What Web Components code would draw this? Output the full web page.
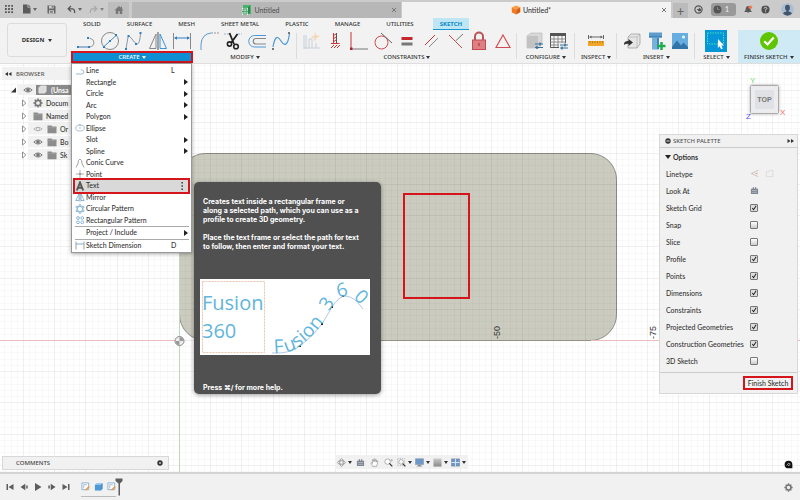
<!DOCTYPE html>
<html lang="en">
<head>
<meta charset="utf-8">
<title>Untitled</title>
<style>
html,body{margin:0;height:100%}
body{overflow:hidden;background:#fff;color:#333;font:500 7px/12px Lato,"Open Sans",sans-serif}
</style>
</head>
<body>
<design-app></design-app>
<script>
const ICONS={
apps:['0 0 9 9','<path fill="#555" d="M0 0h2v2H0zM3.5 0h2v2h-2zM7 0h2v2H7zM0 3.5h2v2H0zM3.5 3.5h2v2h-2zM7 3.5h2v2H7zM0 7h2v2H0zM3.5 7h2v2h-2zM7 7h2v2H7z"/>'],
file:['0 0 9 10','<path fill="#5b5b5b" d="M1 .5h4.5v3h3v6H1zM6.3.5l2.2 2.3H6.3z"/>'],
save:['0 0 9 9','<path fill="#666" d="M.5.5h7l1 1v7h-8z"/><path fill="#ccc" d="M2 .8h4.6v2.6H2zM2 5.2h5v3.3H2z"/><path fill="#666" d="M4.8 1h1v1.8h-1zM3 6h3v.8H3zM3 7.4h3v.6H3z"/>'],
undo:['0 0 9 9','<path d="M4 1 1.2 3.8 4 6.6M1.5 3.8h4Q8 4.2 7.6 8" fill="none" stroke="#555" stroke-width="1.3"/>'],
redo:['0 0 9 9','<path d="M5 1 7.8 3.8 5 6.6M7.5 3.8h-4Q1 4.2 1.4 8" fill="none" stroke="#999" stroke-width="1.2"/>'],
home:['0 0 10 10','<path fill="#777" d="M5 1 .5 5.3h1.3V9h2.4V6.2h1.6V9h2.4V5.3h1.3L8 3.7V1.6H7v1.2z"/>'],
grid:['0 0 10 10','<rect x="1" y="0" width="8" height="9" fill="#47b36b"/><path d="M0 3h6v7H0z" fill="#fff" opacity=".85"/><path d="M1 4h4v5H1zM2 3v7M4 3v7M0 6.5h6" fill="none" stroke="#329a59" stroke-width=".7"/><path d="m6 2 2-1v7l-2 1z" fill="#278a4c"/>'],
cube:['0 0 10 10','<path fill="#ff9b3c" d="M5 .5 9.3 2.3 5.2 4.6.7 2.6z"/><path fill="#f47a20" d="m.7 2.6 4.5 2v5L.9 7.4z"/><path fill="#d95f10" d="m5.2 4.6 4.1-2.3v5L5.2 9.6z"/>'],
sync:['0 0 10 10','<circle cx="5" cy="5" r="4" fill="none" stroke="#555" stroke-width="1.3"/><path d="M3 4.5h2.4V2.4l2.4 2.4V7H5z" fill="#555"/>'],
clock:['0 0 10 10','<circle cx="5" cy="5" r="4.4" fill="#555"/><path d="M5 2.3V5h2.2" fill="none" stroke="#8b8b8b" stroke-width="1"/>'],
bell:['0 0 10 10','<path fill="#585858" d="M4.4 1.2Q7 1 7 4q0 2.300 1.500 3.200v.5h-8v-.5Q2 6.500 2 4q0-2.400 2.400-2.800zM3.300 8.200h2.400q-1.200 1.600-2.400 0z"/><circle cx="7" cy="2.500" r="2" fill="#f2764a"/>'],
help:['0 0 10 10','<circle cx="5" cy="5" r="4.5" fill="#505050"/><path d="M3.500 4Q3.600 2.500 5 2.500T6.500 4Q6.500 4.700 5 5.300V6.200M5 7v1" fill="none" stroke="#ddd" stroke-width="1"/>'],
user:['0 0 14 14','<circle cx="7" cy="7" r="6.800" fill="#a9bdd3"/><path fill="#43556b" d="M7 2q2.600 0 2.600 2.800T8.200 8v1.200q3.300.600 3.600 2.500-4.800 3.800-9.600 0 .3-1.900 3.600-2.500V8Q4.400 7.600 4.400 4.800T7 2z"/>'],
line:['0 0 20 20','<path d="M2 16h12q3.500-.5 4-4t-4.500-5" fill="none" stroke="#999"/><path d="M2 16h12" stroke="#7ba6cf" fill="none"/><path fill="#2f7fc4" d="M1 15h2v2H1zM12 15h2v2h-2zM11 6h2v2h-2z"/>'],
circle:['0 0 20 20','<circle cx="10" cy="10" r="8.500" fill="none" stroke="#888"/><path d="m4 15.500 12-11" stroke="#3a8ad0"/><path fill="#2f7fc4" d="M3 15h2v2H3zM9 9h2v2H9zM15 3h2v2h-2z"/>'],
spline:['0 0 20 20','<path d="M2 18L4 6q1.500-2 4 2t5 5q3 0 3.500-11" fill="none" stroke="#8b97a3"/><path fill="#2f7fc4" d="M1 17h2v2H1zM3.500 4h2v2h-2zM11 12h2v2h-2zM15.500 1h2v2h-2z"/>'],
mirror:['0 0 20 20','<path d="M8 3v14.500H1.500z" fill="none" stroke="#888"/><path d="M12 3v14.500h6.500z" fill="none" stroke="#3c93d6"/><path d="M10 1v18" stroke="#555"/>'],
dim:['0 0 20 20','<path d="M1.500 2v16M18.500 2v16" stroke="#888"/><path d="M3 7h14" stroke="#2f7fc4"/><path d="M2 7l3-1.800v3.600zM18 7l-3-1.800v3.600z" fill="#2f7fc4"/>'],
fillet:['0 0 20 20','<path d="M2 19V13Q3 3 12 2" fill="none" stroke="#559bd5"/><path d="M12 2h8" stroke="#999" stroke-dasharray="2 1"/>'],
scissors:['0 0 20 20','<path d="M1 3h7M15 3h4" stroke="#8fb8d8" stroke-dasharray="2 1"/><path d="M6.500 2l4.500 11M14.500 3 8 12" stroke="#222" stroke-width="1.800" fill="none"/><circle cx="6.500" cy="13" r="2.100" fill="none" stroke="#222" stroke-width="1.600"/><circle cx="13" cy="15.500" r="2.300" fill="none" stroke="#222" stroke-width="1.600"/>'],
offset:['0 0 20 20','<path d="M19 4.500H7.500a5.700 5.700 0 0 0 0 11.500H19" fill="none" stroke="#4a97d8"/><path d="M19 7.500H9a2.700 2.700 0 0 0 0 5.500h10" fill="none" stroke="#888" stroke-width="1.200"/>'],
curve:['0 0 20 20','<path d="M2 16C4 4 7 5 10 10S17 16 18.500 2" fill="none" stroke="#4a97d8" stroke-width="1.200"/><path d="M1 17h2v2H1zM17 1h2v2h-2z" fill="#777"/>'],
autodim:['0 0 20 20','<g opacity=".4"><path d="M3 4v14M5 4v14M3 17h16" fill="none" stroke="#8ca0b4"/><path d="M8 8h3v9M8 8v9M15 12v5" fill="none" stroke="#8ca0b4"/><path d="m14 1 1.200 3.200L19 5l-3.400 2L14 11l-1-3.800L10 6l3.400-1.400z" fill="#f3b25e"/></g>'],
horiz:['0 0 20 20','<path d="M11.500 2v10" stroke="#555"/><path d="M8.500 2v10M6 12.500h8.500" stroke="#c33"/><path d="m8 5 3-2M8 8l3-2M8 11l3-2M6 17l3-3M9 17l3-3M12 17l3-3" stroke="#c33" fill="none"/>'],
perp:['0 0 20 20','<path d="M2 1v17" stroke="#c8323a"/><path d="M2 18h17" stroke="#777"/><rect x="1" y="16.500" width="2.500" height="2.500" fill="#a22"/>'],
tangent:['0 0 20 20','<circle cx="8.500" cy="11.500" r="6.500" fill="none" stroke="#cf4a50"/><path d="M8 2l11 10" stroke="#666"/>'],
equal:['0 0 20 20','<path fill="#c4282d" d="M4.500 6h11v3h-11z"/><path fill="#777" d="M4.500 11.500h11v3h-11z"/>'],
parallel:['0 0 20 20','<path d="M4 14 14 4" stroke="#c8323a"/><path d="m8 16 9-9" stroke="#888"/>'],
coinc:['0 0 20 20','<path d="M4 4l6.500 6.500L17 17" stroke="#cf4a50" fill="none"/><path d="M10.500 10 18 3" stroke="#777"/>'],
lock:['0 0 20 20','<path d="M6 9V5.500a4 4 0 0 1 8 0V9" fill="none" stroke="#b55" stroke-width="2"/><rect x="3.500" y="9" width="13" height="9.500" fill="#dd8085" stroke="#c44a50"/><path d="M10 12v3" stroke="#a22" stroke-width="1"/>'],
tri:['0 0 20 20','<path d="M10 4 17 16.500H3z" fill="none" stroke="#cf4a50" stroke-width="1.100"/>'],
block:['0 0 20 20','<path fill="#d8d8d8" stroke="#aaa" stroke-width=".5" d="M3 5l4-3h11v11l-3 4H3z"/><path fill="#c2c2c2" d="M3 5h11v12H3z"/><path d="M11 13h8M11 16.500h8" stroke="#39709c"/><path d="M16 11.500v3M13 15v3" stroke="#39709c" stroke-width="1.500"/>'],
tablecfg:['0 0 20 20','<path d="M2.500 2.500h15v14h-15z" fill="#f6f6f6" stroke="#555"/><path d="M2 2h16v3H2z" fill="#555"/><path d="M2 8h16M2 11h16M2 14h10M6 5v11M10 5v11M14 5v7" stroke="#777" stroke-width=".8"/><path fill="#f2f2f2" d="M11 12h9v8h-9z"/><path d="M12 14h8M12 17h8" stroke="#39709c"/><path d="M17 12.500v3M14 15.500v3" stroke="#39709c" stroke-width="1.500"/>'],
ruler:['0 0 20 20','<path d="M2.500 4v4M17.500 4v4M4 6h12" stroke="#666"/><path d="m3 6 2.500-1.500v3zM17 6l-2.500-1.500v3z" fill="#666"/><path fill="#f0a628" d="M2 10h16v5H2z"/><path d="M4 10v2M6.500 10v2M9 10v2M11.500 10v2M14 10v2M16.500 10v2" stroke="#a86c10" stroke-width=".7"/>'],
insert:['0 0 20 20','<path fill="#e6e6e6" stroke="#888" stroke-width=".6" d="M6 6l3-3h9v10l-3 4H6z"/><path d="M6 6h9v11M15 6l3-3" fill="none" stroke="#aaa" stroke-width=".6"/><path fill="#333" d="M2 14q-.5-4 4.500-4V8l4.500 3.500L6.500 15v-2.200Q3.500 12.500 2 14z"/>'],
bolt:['0 0 20 20','<path fill="#5d9ccc" d="M3 1.500h13v5H3z"/><path fill="#76b1dc" d="M6 6.500h7V18.500H6z"/><path fill="#3f83b8" d="M3 5h13v1.500H3zM11 7h2v11h-2z"/><path d="M15.500 11v8M11.500 15h8" stroke="#1cae4c" stroke-width="2.500"/>'],
image:['0 0 20 20','<path fill="#66aee0" d="M2 2h16v16H2z"/><circle cx="13.500" cy="6" r="1.600" fill="#e8f5ff"/><path fill="#3273a8" d="m2 16 5-6.500 4 5 2.500-3L18 16v2H2z"/>'],
select:['0 0 22 22','<path fill="#0696d7" d="M0 0h22v22H0z"/><path d="M2.500 3h16v11h-16z" fill="none" stroke="#45dfb8" stroke-dasharray="1.500 1"/><path d="m13 9 6 6.500h-2.700l1.500 3-1.700.8-1.400-3.100-1.900 1.800z" fill="#fff"/>'],
check:['0 0 20 20','<circle cx="10" cy="10" r="9" fill="#5fc500"/><path d="m5.200 10.200 3.300 3.300 6.200-7" fill="none" stroke="#fff" stroke-width="2.200"/>'],
mline:['0 0 10 10','<path d="M1 8h6q2-.5 2-2T6 3.500" fill="none" stroke="#88a4bd" stroke-width=".8"/>'],
mellipse:['0 0 10 10','<ellipse cx="5" cy="5" rx="4.300" ry="3" fill="none" stroke="#88a4bd" stroke-width=".7"/><path d="M4.500 4.500h1v1h-1zM4.500 1.500h1v1h-1z" fill="#48a"/>'],
conic:['0 0 10 10','<path d="M1 9.500Q3.500 6 3.500 2.500q1.500-3 3 0Q6.500 6 9 9.500" fill="none" stroke="#888" stroke-width=".8"/>'],
point:['0 0 10 10','<path d="M5 1v8M1 5h8" stroke="#888" stroke-width=".7"/><path d="M4.500 4.500h1v1h-1z" fill="#247"/>'],
text:['0 0 10 10','<path d="M1.800 9.500 5 1.500l3.200 8M3 6.800h4" fill="none" stroke="#555" stroke-width="1.900"/>'],
mmirror:['0 0 10 10','<path d="M4 2v6.500H.8zM6 2v6.500h3.200z" fill="none" stroke="#5b9bcd" stroke-width=".7"/><path d="M5 0v10" stroke="#888" stroke-width=".6"/>'],
circpat:['0 0 10 10','<circle cx="5" cy="5" r="2.800" fill="none" stroke="#79add6" stroke-width=".8"/><g fill="#fff" stroke="#5b9bcd" stroke-width=".7"><circle cx="5" cy="1.500" r="1"/><circle cx="8" cy="3.200" r="1"/><circle cx="8" cy="6.800" r="1"/><circle cx="5" cy="8.500" r="1"/><circle cx="2" cy="6.800" r="1"/><circle cx="2" cy="3.200" r="1"/></g>'],
rectpat:['0 0 10 10','<g fill="none" stroke="#6fa5d0" stroke-width=".8"><circle cx="3" cy="3" r="1.400"/><circle cx="7.300" cy="3" r="1.400"/><circle cx="3" cy="7.300" r="1.400"/><circle cx="7.300" cy="7.300" r="1.400"/></g>'],
mdim:['0 0 10 10','<path d="M1 1.500v8M9 1.500v8" stroke="#888" stroke-width=".8"/><path d="M1 4h8" stroke="#5b9bcd" stroke-width=".8"/>'],
eye:['0 0 10 10','<path d="M.8 5Q5 .8 9.200 5 5 9.200.800 5z" fill="#ddd" stroke="#777" stroke-width=".9"/><circle cx="5" cy="5" r="1.800" fill="#777"/>'],
eyeoff:['0 0 10 10','<path d="M.8 5Q5 1.500 9.200 5 5 8.500.800 5z" fill="none" stroke="#aaa" stroke-width=".8"/><circle cx="5" cy="5" r="1.600" fill="none" stroke="#aaa" stroke-width=".7"/>'],
folder:['0 0 10 10','<path fill="#8d8d8d" d="M.5 1.500h4l.8 1h4.200v6.700h-9z"/><path d="M.5 3.700h9" stroke="#aaa" stroke-width=".5"/>'],
gear:['0 0 10 10','<circle cx="5" cy="5" r="2.700" fill="none" stroke="#777" stroke-width="1.700"/><path d="M5 .4v2M5 7.600v2M.4 5h2M7.600 5h2M1.800 1.800l1.300 1.300M6.900 6.900l1.300 1.300M8.200 1.800 6.900 3.100M3.100 6.900 1.800 8.200" stroke="#777" stroke-width="1.500"/>'],
comp:['0 0 10 10','<path fill="#ddd" stroke="#f5f5f5" stroke-width=".7" d="M1 3l2-2h6v6L7.500 9H1z"/>'],
open:['0 0 8 8','<path fill="#333" d="M6 1.500v5H1z"/>'],
shut:['0 0 8 8','<path fill="#fff" stroke="#777" stroke-width=".8" d="M2.500 1v6l3.300-3z"/>'],
dleft:['0 0 8 8','<path fill="#333" d="M4 2v4L1 4zM7.500 2v4l-3-2z"/>'],
dright:['0 0 8 8','<path fill="#333" d="M4 2v4l3-2zM.5 2v4l3-2z"/>'],
minus:['0 0 6 6','<circle cx="3" cy="3" r="2.700" fill="#333"/><path d="M1.500 3h3" stroke="#eee"/>'],
plusdot:['0 0 6 6','<circle cx="3" cy="3" r="2.700" fill="#333"/><path d="M2 3h2M3 2v2" stroke="#ddd" stroke-width=".8"/>'],
ltype:['0 0 10 10','<path d="M9 1.500 1.500 5 9 8.500" fill="none" stroke="#b39a8a" stroke-width=".8" stroke-dasharray="1.500 .5"/><path d="M6 5h2.500" stroke="#d99"/>'],
ltype2:['0 0 10 10','<path d="M1.500 3h3l1-1.500h3l.5 7h-7.500z" fill="none" stroke="#d8d4d0" stroke-width=".8"/>'],
look:['0 0 10 10','<path fill="#7d8590" d="M1 3h2V1.500h1.500V3h1V1.500H7V3h2v6H1z"/><path d="M2 5h6M2 7h6" stroke="#c8ccd2" stroke-width=".7"/>'],
orbit:['0 0 10 10','<ellipse cx="5" cy="5" rx="4.300" ry="2" fill="none" stroke="#777" stroke-width=".7"/><ellipse cx="5" cy="5" rx="2" ry="4.300" fill="none" stroke="#777" stroke-width=".7"/>'],
hand:['0 0 10 10','<path d="M3 9.300 1 5.500q.6-1 1.800.5L2.600 2q.8-.8 1.300.3L4.200 4V1.300q.8-.8 1.300 0V4l.4-2.300q.8-.6 1.200.2L7 4.500l.7-1.300q1-.3 1 .6L7.500 9.300z" fill="#fff" stroke="#777" stroke-width=".6"/>'],
zoom:['0 0 10 10','<circle cx="4" cy="4" r="3" fill="#fff" stroke="#888" stroke-width=".7"/><path d="m6 6 3.200 3.300" stroke="#333" stroke-width="1.400"/><path d="M8.500 1v3M7 2.500h3" stroke="#888" stroke-width=".5"/>'],
fit:['0 0 10 10','<path d="M.5.500h8v8h-8z" fill="none" stroke="#aaa" stroke-width=".7" stroke-dasharray="1.500 1"/><circle cx="4.500" cy="4.300" r="2.600" fill="#fff" stroke="#888" stroke-width=".7"/><path d="m6.300 6.300 3 3" stroke="#333" stroke-width="1.400"/>'],
screen:['0 0 10 10','<path fill="#6d98c8" stroke="#8793a0" stroke-width=".6" d="M.5.800h9v6.500h-9z"/><path fill="#7f8b98" d="M3.500 7.500h3v1.200H8v.8H2v-.8h1.500z"/>'],
shade:['0 0 10 10','<defs><linearGradient id="g" x2="0" y2="1"><stop stop-color="#ccc"/><stop offset="1" stop-color="#888"/></linearGradient></defs><path fill="url(#g)" d="M.5.500h9v9h-9z"/>'],
views:['0 0 10 10','<path fill="#6d98c8" stroke="#6d7f92" stroke-width=".6" d="M.5 1h9v8h-9z"/><path d="M5 1v8M.5 5h9" stroke="#dfe9f4"/>'],
first:['0 0 10 10','<path fill="#5c5c5c" d="M1.500 2H3v6H1.500zM8.500 2v6L3.500 5z"/>'],
prev:['0 0 10 10','<path fill="#5c5c5c" d="M6.300 1.800v6.400L1.500 5zM7.200 3.500h1.500v3H7.200z"/>'],
play:['0 0 10 10','<path fill="#5c5c5c" d="M2 1v8l6.500-4z"/>'],
next:['0 0 10 10','<path fill="#5c5c5c" d="M3.700 1.800v6.400L8.500 5zM1.300 3.500h1.500v3H1.300z"/>'],
last:['0 0 10 10','<path fill="#5c5c5c" d="M7 2h1.500v6H7zM1.500 2v6l5-3z"/>'],
sketch:['0 0 10 10','<path fill="#f8fbff" stroke="#6f9cc4" stroke-width=".8" d="M1 1h7.500v7.500H1z"/><path d="M3 3h3.500M3 3v4" stroke="#9ab" stroke-width=".8"/><path d="m4.500 8.500 4-4 1.200 1-4 4z" fill="#ef9438"/>'],
extrude:['0 0 10 10','<path fill="#9bcbee" d="M1 3l2-2h6.500L8 3z"/><path fill="#4c9bd6" d="M1 3h7v6.500H1z"/><path fill="#2f78b0" d="m8 3 1.500-2v6L8 9.500z"/>'],
marker:['0 0 8 18','<path fill="#5c5c5c" d="M.5.500h7v2.500l-2.500 2.500V17.500H3.500V5.500L.5 3z"/>'],
speech:['0 0 10 10','<path fill="#111" d="M5 .7A4.300 4.300 0 1 0 5 9.300h4.300V5A4.300 4.300 0 0 0 5 .7z"/><path d="M3 6q2-4 4-1.500M4.500 6.500q1-1.500 2.500-1" fill="none" stroke="#ddd" stroke-width=".8"/>'],
more:['0 0 4 8','<path fill="#222" d="M1.500 0h1.300v1.500H1.500zM1.500 3.200h1.300v1.500H1.500zM1.500 6.400h1.300V8H1.500z"/>']
};

class Base extends HTMLElement{
  constructor(){super();this.attachShadow({mode:'open'})}
  connectedCallback(){
    this.shadowRoot.innerHTML=`<style>*{box-sizing:border-box}button{font:inherit;color:inherit;background:none;border:0;padding:0;margin:0}${this.css()}</style>${this.html()}`;
  }
  css(){return ''}
  html(){return '<slot></slot>'}
  at(n){return this.getAttribute(n)||''}
}
const def=(n,css,html)=>customElements.define(n,class extends Base{css(){return typeof css==='function'?css(this):css}html(){return typeof html==='function'?html(this):html}});
const ic=(n,w=10,h=w)=>`<ui-icon name="${n}" w="${w}" h="${h}"></ui-icon>`;
const CAPS='font:500 6px/12px "Noto Sans","Open Sans",sans-serif';

def('ui-icon',e=>`:host{display:block;flex:none;width:${e.at('w')}px;height:${e.at('h')}px}svg{display:block;width:100%;height:100%}`,
  e=>{const [v,s]=ICONS[e.at('name')];return `<svg viewBox="${v}" aria-hidden="true">${s}</svg>`});

def('ui-caret',':host{display:inline-block;flex:none;border:2px solid transparent;border-top:3px solid currentColor;border-bottom:0}','');

def('doc-tab',`:host{display:flex;align-items:center;flex:1;background:#b7b7b7;color:#555;margin-top:2px;padding-right:3px}
:host([active]){background:#f2f2f2;color:#333}
.t{flex:1;display:flex;align-items:center;justify-content:center;gap:2px}
.x{width:8px;height:10px}.x svg{display:block;width:8px;height:8px}`,
e=>`<span class="t">${ic(e.at('icon'),10)}<slot></slot></span><button class="x" aria-label="Close tab"><svg viewBox="0 0 8 8"><path d="m2 2 4 4M6 2 2 6" stroke="#777"/></svg></button>`);

def('title-bar',`:host{display:flex;height:18px;background:#cbcbcb;align-items:stretch}
.quick{display:flex;align-items:center;width:108px;padding-left:5px;flex:none}
.quick button{display:flex;align-items:center;gap:2px;color:#666}
.a{margin-right:9px}.b{margin-right:10px}.c{margin-right:11px}.d{margin-right:7px}.faded{opacity:.7}
.home{width:21px;margin:2px 3px 0 0;background:#bdbdbd;display:flex;align-items:center;justify-content:center}
.tabs{flex:1;display:flex;gap:1px}
.plus{width:15px;margin:3px 6px 0 2px;background:#bbb;font-size:13px;color:#666;line-height:12px}
.right{display:flex;align-items:center;gap:8px;padding-right:6px}.h{margin-right:3px}
.jobs{display:flex;align-items:center;gap:3px;width:25px;height:13px;background:#999;border-radius:3px;padding-left:2px;color:#eee}`,
`<div class="quick"><button class="a" aria-label="Show data panel">${ic('apps',8)}</button><button class="b" aria-label="File">${ic('file',9,10)}<ui-caret></ui-caret></button><button class="c" aria-label="Save">${ic('save',9)}</button><button class="d" aria-label="Undo">${ic('undo',9)}<ui-caret></ui-caret></button><button class="faded" aria-label="Redo">${ic('redo',9)}<ui-caret></ui-caret></button></div>
<button class="home" aria-label="Home">${ic('home',10)}</button>
<div class="tabs"><doc-tab icon="grid">Untitled</doc-tab><doc-tab icon="cube" active>Untitled*</doc-tab></div>
<button class="plus" aria-label="New tab">+</button>
<div class="right"><button aria-label="Extensions">${ic('sync',9)}</button><button class="jobs">${ic('clock',9)}1</button><button aria-label="Notifications">${ic('bell',9)}</button><button class="h" aria-label="Help">${ic('help',9)}</button><button aria-label="Account">${ic('user',13)}</button></div>`);

def('tool-group',e=>`:host{display:flex;flex-direction:column;flex:none;position:relative;padding:0 ${e.at('pad')||5}px}
:host([line])::after{content:"";position:absolute;right:0;top:3px;bottom:4px;width:1px;background:#dcdcdc}
.i{display:flex;justify-content:center;align-items:center;gap:4px;height:21px}
.l{display:flex;align-items:center;justify-content:center;gap:2px;height:12px;white-space:nowrap}
:host([open]){padding:0}:host([open]) .l{background:#0f8fd3;color:#fff;border:2px solid #d5141c}:host([open]) .i{padding:0 1px 0 5px}
:host([finish]){flex:1;background:#cfeaf5;padding:0}`,
e=>`<div class="i">${e.at('icons').split(' ').map(n=>`<button aria-label="${n}">${ic(n,n=='select'?22:20)}</button>`).join('')}</div><button class="l"><slot></slot><ui-caret></ui-caret></button>`);

def('ribbon-bar',`:host{display:flex;background:#f2f2f2;height:46px;border-bottom:1px solid #dedede;${CAPS}}
.ws{flex:none;width:60px;margin:5px 4px 6px 7px;border:1px solid #dcdcdc;border-radius:3px;font-weight:700;display:flex;align-items:center;justify-content:center;gap:4px}
.m{flex:1}.tabs{display:flex;height:12px;gap:26px;padding-left:12px}.tabs button{line-height:12px}
.tabs .on{color:#0a8bcb;background:#bfe6f5;font-weight:700;padding:0 7px;margin:0 -7px;box-shadow:inset 0 -1px #1797d4}
.g{display:flex}`,
`<button class="ws">DESIGN <ui-caret></ui-caret></button>
<div class="m"><nav class="tabs">${['SOLID','SURFACE','MESH','SHEET METAL','PLASTIC','MANAGE','UTILITIES'].map(t=>`<button>${t}</button>`).join('')}<button class="on">SKETCH</button></nav>
<div class="g"><tool-group open icons="line circle spline mirror dim">CREATE</tool-group><tool-group line pad="6" icons="fillet scissors offset curve">MODIFY</tool-group><tool-group line pad="4" icons="autodim horiz perp tangent equal parallel coinc lock tri">CONSTRAINTS</tool-group><tool-group line pad="7" icons="block tablecfg">CONFIGURE</tool-group><tool-group line pad="6" icons="ruler">INSPECT</tool-group><tool-group line icons="insert bolt image">INSERT</tool-group><tool-group pad="8" icons="select">SELECT</tool-group><tool-group finish icons="check">FINISH SKETCH</tool-group></div></div>`);

def('menu-item',`:host{display:flex;position:relative}
button{flex:1;display:flex;align-items:center;text-align:left;padding:0 8px 0 3px;min-height:0;line-height:11px}
.i{width:11px;flex:none}.t{flex:1}.k{width:12px}
.arr{border:3px solid transparent;border-left:4px solid #222;border-right:0;margin-right:-5px}
:host([on]) button{background:#d9d9d9;outline:2px solid #d5141c;margin:0 3px;padding:0 4px 0 0}:host([on]){z-index:1}`,
e=>`<button role="menuitem"><span class="i">${e.at('icon')?ic(e.at('icon'),10):''}</span><span class="t"><slot></slot></span>${e.hasAttribute('sub')?'<span class="arr"></span>':''}${e.at('key')?`<span class="k">${e.at('key')}</span>`:''}${e.hasAttribute('on')?ic('more',4,8):''}</button>`);

def('create-menu',`:host{display:grid;width:121px;height:190px;grid-template-rows:repeat(14,1fr) 1px 1fr 1px 1fr;padding:1px 0;background:#fff;border:1px solid #999;box-shadow:0 1px 4px #0005}
hr{border:0;height:1px;width:114px;background:#aaa;margin:0 auto}`,
`<menu-item icon="mline" key="L">Line</menu-item><menu-item sub>Rectangle</menu-item><menu-item sub>Circle</menu-item><menu-item sub>Arc</menu-item><menu-item sub>Polygon</menu-item><menu-item icon="mellipse">Ellipse</menu-item><menu-item sub>Slot</menu-item><menu-item sub>Spline</menu-item><menu-item icon="conic">Conic Curve</menu-item><menu-item icon="point">Point</menu-item><menu-item icon="text" on>Text</menu-item><menu-item icon="mmirror">Mirror</menu-item><menu-item icon="circpat">Circular Pattern</menu-item><menu-item icon="rectpat">Rectangular Pattern</menu-item><hr><menu-item sub>Project / Include</menu-item><hr><menu-item icon="mdim" key="D">Sketch Dimension</menu-item>`);

def('tree-row',`:host{display:flex;align-items:center;height:13px;padding-left:18px}
.b{flex:1;display:flex;align-items:center;gap:4px;background:#f1f1f1;height:11px;padding-left:5px;white-space:nowrap}
.n{margin-left:-1px}:host([root]){padding-left:8px}
:host([root]) .n{flex:1;background:#8a8a8a;color:#fff;font-weight:700;display:flex;align-items:center;gap:4px;padding-left:2px;height:10px}`,
e=>`${ic(e.hasAttribute('root')?'open':'shut',8)}<span class="b">${e.at('icons').split(' ').map(n=>ic(n,10)).join('')}<span class="n">${e.hasAttribute('root')?ic('comp',9):''}<slot></slot></span></span>`);

def('browser-panel',`:host{display:block;width:70px}
header{display:flex;align-items:center;gap:4px;height:13px;background:#f1f1f1;padding-left:2px;margin-bottom:3px;color:#555;${CAPS}}`,
`<header>${ic('dleft',8)}<span>BROWSER</span></header><tree-row root icons="eye">(Unsa</tree-row><tree-row icons="gear">Docum</tree-row><tree-row icons="folder">Named</tree-row><tree-row icons="eyeoff folder">Or</tree-row><tree-row icons="eye folder">Bo</tree-row><tree-row icons="eye folder">Sk</tree-row>`);

def('help-tip',`:host{display:flex;flex-direction:column;width:187px;height:212px;padding:15px 9px 2px;background:#505050;color:#fff;border-radius:5px;box-shadow:0 1px 4px #0006;font:700 7px/9px Inter,sans-serif}
p{margin:0 0 9px;white-space:nowrap}svg{display:block;margin:19px 0 0 -3px;background:#fff;width:170px;height:76px;overflow:visible}
footer{margin-top:auto;line-height:9px}`,
`<p>Creates text inside a rectangular frame or<br>along a selected path, which you can use as a<br>profile to create 3D geometry.</p><p>Place the text frame or select the path for text<br>to follow, then enter and format your text.</p>
<svg viewBox="0 0 170 76"><path d="M2.500 2.500h62v71h-62z" fill="none" stroke="#e9c5ae" stroke-dasharray="2 1"/><path id="p" d="M72 74Q90 75 100 67 113 57 122 45L132 28Q139 17 146 17 155 18 163 30" fill="none" stroke="#9fb8dc" stroke-width=".8"/><path fill="#222" d="M99 66h2v2h-2zM121 44h2v2h-2zM131 27h2v2h-2zM142 16h2v2h-2z"/><g fill="#62b5dc" font-family="Open Sans" font-size="20" font-weight="400"><text x="2" y="31">Fusion</text><text x="2" y="59">360</text><text font-size="19" x="2 14 26 35 40 52 64 75 82 91 98 106"><textPath href="#p">Fusion 3 6 0</textPath></text></g></svg>
<footer>Press ⌘/ for more help.</footer>`);

def('palette-row',`:host{display:block}label,.r{display:grid;grid-template-columns:1fr 47px;align-items:center;height:17px}
.v{display:flex;gap:6px;align-items:center}
input{appearance:none;width:8px;height:8px;margin:0;border:1px solid #777;border-radius:1px;background:linear-gradient(#fff,#ccc)}
input:checked{background:#ddd url('data:image/svg+xml,<svg xmlns="http://www.w3.org/2000/svg" viewBox="0 0 7 7"><path d="M1.500 3.500l1.500 2L6 .8" fill="none" stroke="%23222" stroke-width="1.200"/></svg>')}
button{display:block}`,
e=>e.at('icons')?`<div class="r"><span><slot></slot></span><span class="v">${e.at('icons').split(' ').map(n=>`<button aria-label="${n}">${ic(n,9)}</button>`).join('')}</span></div>`:`<label><span><slot></slot></span><span class="v"><input type="checkbox"${e.hasAttribute('on')?' checked':''}></span></label>`);

def('sketch-palette',`:host{display:block;width:139px;background:#f1f1f1;border:1px solid #d8d8d8}
header{display:flex;align-items:center;gap:2px;height:13px;padding:0 2px 0 5px;border-bottom:1px solid #ccc;color:#555;${CAPS}}header span{flex:1}
.o{display:flex;align-items:center;gap:2px;font-weight:700;height:17px;padding-left:5px}.o i{border:3px solid transparent;border-top:4px solid #222;border-bottom:0}
.l{padding-left:6px;padding-bottom:3px}footer{border-top:1px solid #ccc;display:flex;justify-content:flex-end;padding:3px 4px}
footer button{border:2px solid #d5141c;line-height:10px;width:50px;white-space:nowrap}`,
`<header>${ic('minus',6)}<span>SKETCH PALETTE</span>${ic('dright',8)}</header><div class="o"><i></i>Options</div><div class="l"><palette-row icons="ltype ltype2">Linetype</palette-row><palette-row icons="look">Look At</palette-row><palette-row on>Sketch Grid</palette-row><palette-row>Snap</palette-row><palette-row>Slice</palette-row><palette-row on>Profile</palette-row><palette-row on>Points</palette-row><palette-row on>Dimensions</palette-row><palette-row on>Constraints</palette-row><palette-row on>Projected Geometries</palette-row><palette-row on>Construction Geometries</palette-row><palette-row>3D Sketch</palette-row></div><footer><button>Finish Sketch</button></footer>`);

def('view-cube',`:host{display:block;width:44px;height:44px}svg{display:block}`,
`<svg width="44" height="44" font-family="Liberation Sans" font-size="8"><defs><filter id="s"><feDropShadow dx="0" dy="0" stdDeviation="1.500" flood-opacity=".3"/></filter></defs><rect x="6.500" y="9.500" width="28" height="28" rx="1" fill="#ececee" stroke="#aaa" filter="url(#s)"/><path fill="#dfe1e5" d="M11 14h19v19H11z"/><text x="20.500" y="26" text-anchor="middle" fill="#777" font-weight="700" font-size="7">TOP</text><text x="6" y="7" fill="#6fe06f">Y</text><text x="2" y="43" fill="#55e">Z</text><text x="36" y="39" fill="#e66">X</text></svg>`);

def('comments-bar',`:host{display:flex;align-items:center;width:167px;height:14px;background:#f1f1f1;border:1px solid #d8d8d8;padding:0 5px 0 13px;color:#444;${CAPS}}button{flex:1;text-align:left}`,`<button>COMMENTS</button>${ic('plusdot',6)}`);

def('nav-bar',`:host{display:flex;align-items:center;height:14px;background:#f1f1f1;padding:0 2px;gap:3px}button{display:flex;align-items:center;gap:2px}.p{margin:0 1px}`,
['orbit+','look','hand','zoom','fit+','screen+','shade+','views+'].map(n=>`<button${n.endsWith('+')?'':' class="p"'} aria-label="${n.replace('+','')}">${ic(n.replace('+',''),9)}${n.endsWith('+')?'<ui-caret></ui-caret>':''}</button>`).join(''));

def('sketch-plane',`:host{position:absolute;inset:0;overflow:hidden}svg{position:absolute;width:100%;height:100%}`,
()=>{const mj=[0,31,62,94,125];let a='',b='';for(let i=0;i<25;i++){const p=Math.round(i*6.24);if(mj.includes(p))b+=`M${p}.5 0v156M0 ${p}.5h156`;else a+=`M${p}.5 0v156M0 ${p}.5h156`}
return `<svg><defs><pattern id="g" x="179" y="276" width="156" height="156" patternUnits="userSpaceOnUse"><path d="${a}" stroke="#000" stroke-opacity=".025"/><path d="${b}" stroke="#000" stroke-opacity=".06"/></pattern></defs>
<rect x="179.500" y="89.500" width="437" height="187" rx="26" fill="#cbccbf" stroke="#8f8f88"/>
<rect width="100%" height="100%" fill="url(#g)"/><path d="M0 276.500h179M617 276.500h400" stroke="#eebcbc"/><path d="M205 276.500h386" stroke="#96908a"/><path d="M591 276.500h26" stroke="#eebcbc"/><path d="M179.500 0v600" stroke="#bcd8bc"/>
<circle cx="179.500" cy="277" r="4.500" fill="#eee" stroke="#888"/><path d="M179.500 277v-4a4 4 0 0 1 4 4zM179.500 277v4a4 4 0 0 1-4-4z" fill="#999"/>
<g font-family="Liberation Sans" font-size="9" fill="#333"><text transform="translate(500 275) rotate(-90)">-50</text><text transform="translate(656 275) rotate(-90)">-75</text></g>
<rect x="404" y="130" width="65" height="104" fill="none" stroke="#d5141c" stroke-width="2"/></svg>`});

def('design-canvas',`:host{display:block;position:relative;flex:1;min-height:0;background:#fff}
create-menu{position:absolute;left:71px;top:0;z-index:3;margin-top:-1px}
help-tip{position:absolute;left:194px;top:118px;z-index:2}
browser-panel{position:absolute;left:2px;top:3px}
sketch-palette{position:absolute;right:2px;top:70px}
view-cube{position:absolute;right:12px;top:12px}
comments-bar{position:absolute;left:2px;bottom:2px}
nav-bar{position:absolute;left:50%;margin-left:-65px;bottom:3px}
.sp{position:absolute;right:7px;bottom:3px}`,
`<sketch-plane></sketch-plane><browser-panel></browser-panel><view-cube></view-cube><sketch-palette></sketch-palette><help-tip></help-tip><create-menu></create-menu><comments-bar></comments-bar><nav-bar></nav-bar><button class="sp" aria-label="Assistant">${ic('speech',9)}</button>`);

def('time-line',`:host{display:flex;align-items:center;height:28px;background:#f1f1f1;border-top:2px solid #d4d4d4;padding:0 7px 0 5px;gap:4px}
.f{display:flex;gap:4px;margin-left:6px;border-bottom:1px solid #bbb;padding-bottom:5px;margin-top:5px}
.m{margin-left:-5px}.s{margin-left:auto}`,
`${['first','prev','play','next','last'].map(n=>`<button aria-label="${n}">${ic(n,10)}</button>`).join('')}<div class="f">${ic('sketch',9)}${ic('extrude',9)}${ic('sketch',9)}</div><div class="m">${ic('marker',8,18)}</div><button class="s" aria-label="Settings">${ic('gear',9)}</button>`);

def('design-app',`:host{display:flex;flex-direction:column;height:100vh}`,`<title-bar></title-bar><ribbon-bar></ribbon-bar><design-canvas></design-canvas><time-line></time-line>`);
</script>
</body>
</html>
